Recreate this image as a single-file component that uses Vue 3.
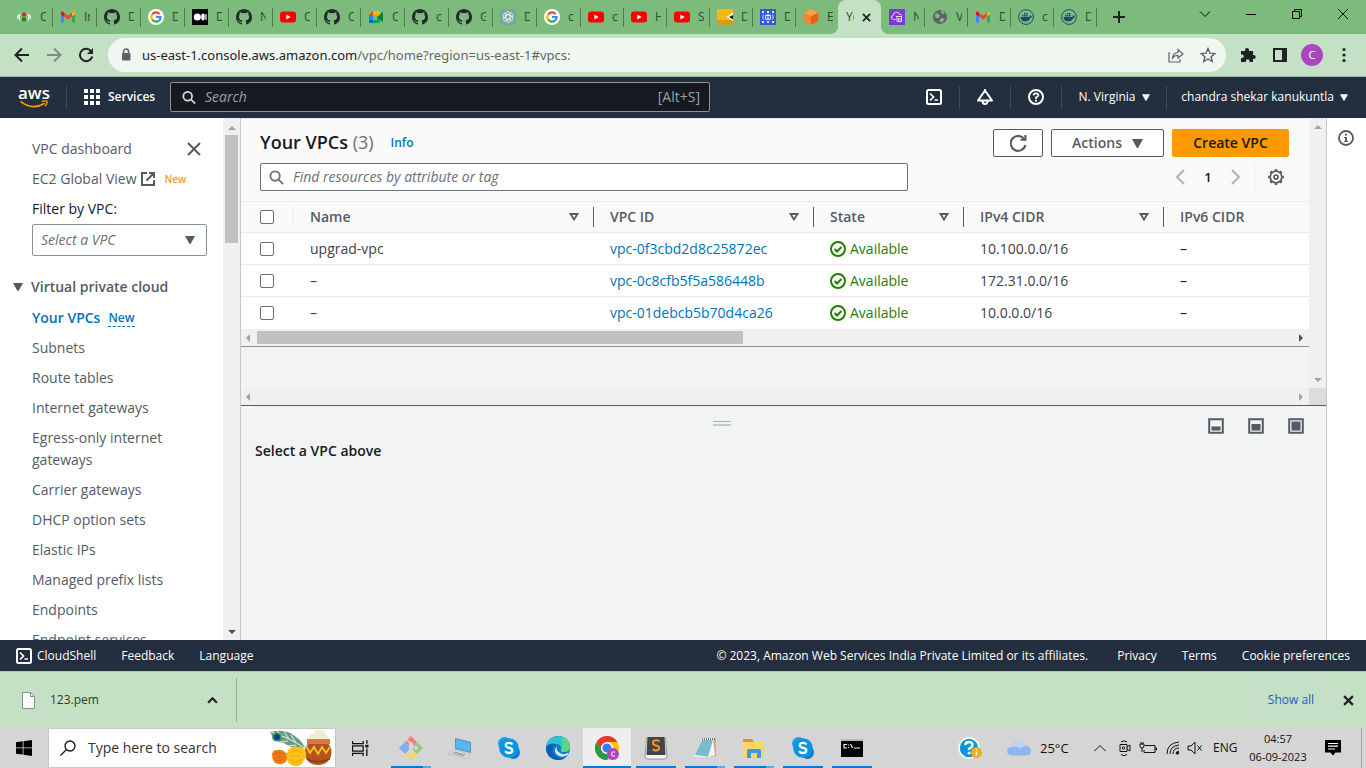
<script setup>
import { ref } from 'vue'

const tabs = [
  { icon: 'jenkins', text: 'C' }, { icon: 'gmail', text: 'In' }, { icon: 'github', text: 'D' },
  { icon: 'google', text: 'D' }, { icon: 'medium', text: 'D' }, { icon: 'github', text: 'N' },
  { icon: 'youtube', text: 'C' }, { icon: 'github', text: 'C' }, { icon: 'meet', text: 'C' },
  { icon: 'github', text: 'c' }, { icon: 'github', text: 'G' }, { icon: 'openai', text: 'D' },
  { icon: 'google', text: 'c' }, { icon: 'youtube', text: 'c' }, { icon: 'youtube', text: 'H' },
  { icon: 'youtube', text: 'S' }, { icon: 'yellow', text: 'D' }, { icon: 'ecs', text: 'D' },
  { icon: 'cube', text: 'E' }, { icon: '', text: 'Yo', active: true }, { icon: 'vpc', text: 'N' },
  { icon: 'globe', text: 'V' }, { icon: 'gmail', text: 'D' }, { icon: 'docker', text: 'c' },
  { icon: 'docker', text: 'D' }
]

const navItems = [
  'Subnets', 'Route tables', 'Internet gateways', 'Egress-only internet gateways',
  'Carrier gateways', 'DHCP option sets', 'Elastic IPs', 'Managed prefix lists',
  'Endpoints', 'Endpoint services'
]

const columns = ['Name', 'VPC ID', 'State', 'IPv4 CIDR', 'IPv6 CIDR']
const rows = [
  { name: 'upgrad-vpc', id: 'vpc-0f3cbd2d8c25872ec', v4: '10.100.0.0/16' },
  { name: '–', id: 'vpc-0c8cfb5f5a586448b', v4: '172.31.0.0/16' },
  { name: '–', id: 'vpc-01debcb5b70d4ca26', v4: '10.0.0.0/16' }
]

const apps = [
  { icon: 'git', label: 'Git Bash', state: 'multi' },
  { icon: 'laptop', label: 'Remote desktop', state: '' },
  { icon: 'skype', label: 'Skype', state: '' },
  { icon: 'edge', label: 'Microsoft Edge', state: '' },
  { icon: 'chrome', label: 'Google Chrome', state: 'current' },
  { icon: 'sublime', label: 'Sublime Text', state: 'open' },
  { icon: 'notepad', label: 'Notepad', state: 'multi' },
  { icon: 'explorer', label: 'File Explorer', state: 'multi' },
  { icon: 'skype', label: 'Skype call', state: 'open' },
  { icon: 'cmd', label: 'Command Prompt', state: 'open' }
]

const service = ref('')
const query = ref('')
const selected = ref([])
</script>

<template>
  <div class="screen">
    <svg class="defs" aria-hidden="true">
      <symbol id="jenkins" viewBox="0 0 16 16"><circle cx="8" cy="5.6" r="2.1" fill="#c62828"/><circle cx="8" cy="10.4" r="2.1" fill="#128a12"/><path d="M4 4.5Q2.6 8 4 11.5M12 4.5q1.4 3.500 0 7M2.200 5.500Q1 8 2.200 10.500M13.800 5.500Q15 8 13.800 10.500" fill="none" stroke="#e4f5e2" stroke-width="1.300"/></symbol>
      <symbol id="gmail" viewBox="0 0 16 16"><path d="M1 4v9.500h3V7z" fill="#4285f4"/><path d="M15 4v9.500h-3V7z" fill="#34a853"/><path d="M1 3.500 2.500 2.500 8 6.700l5.500-4.200L15 3.500V5L8 10.400 1 5z" fill="#ea4335"/><path d="M12 3.700 13.500 2.500Q15 2.500 15 4v1.500L12 7.600z" fill="#fbbc04"/><path d="M4 3.700 2.500 2.500Q1 2.500 1 4v1.500L4 7.600z" fill="#c5221f"/></symbol>
      <symbol id="github" viewBox="0 0 16 16"><path fill="#24292f" d="M8 0C3.580 0 0 3.580 0 8c0 3.540 2.290 6.530 5.470 7.590.4.070.55-.17.55-.38v-1.340c-2.230.48-2.700-1.070-2.700-1.070-.36-.92-.89-1.170-.89-1.170-.73-.5.050-.49.050-.49.810.060 1.230.83 1.230.83.720 1.230 1.880.88 2.340.67.070-.52.280-.88.510-1.080-1.780-.2-3.640-.89-3.640-3.950 0-.87.310-1.590.82-2.150-.08-.2-.36-1.020.080-2.120 0 0 .67-.21 2.200.82a7.600 7.600 0 0 1 4 0c1.530-1.040 2.200-.82 2.200-.82.440 1.100.160 1.920.080 2.120.51.560.82 1.270.82 2.150 0 3.070-1.870 3.750-3.650 3.950.29.250.54.730.54 1.480v2.200c0 .21.150.46.550.38A8 8 0 0 0 16 8c0-4.420-3.580-8-8-8z"/></symbol>
      <symbol id="google" viewBox="0 0 16 16"><circle cx="8" cy="8" r="8" fill="#fff"/><g fill="none" stroke-width="2.200"><path d="M4.100 5.500A4.600 4.600 0 0 1 11.500 5" stroke="#ea4335"/><path d="M4.100 5.500A4.600 4.600 0 0 0 4.200 10.700" stroke="#fbbc05"/><path d="M4.200 10.500A4.600 4.600 0 0 0 11 11.600" stroke="#34a853"/><path d="M8 8h4.600q0 2.300-1.600 3.600" stroke="#4285f4"/></g></symbol>
      <symbol id="medium" viewBox="0 0 16 16"><path fill="#000" d="M0 0h16v16H0z"/><circle cx="5.300" cy="8" r="3.600" fill="#fff"/><ellipse cx="11" cy="8" rx="1.800" ry="3.400" fill="#fff"/><path d="M14 5v6" stroke="#fff" stroke-width="1.200"/></symbol>
      <symbol id="youtube" viewBox="0 0 16 16"><rect y="2.500" width="16" height="11" rx="3" fill="#f00"/><path d="M6.300 5.500v5L10.700 8z" fill="#fff"/></symbol>
      <symbol id="meet" viewBox="0 0 16 16"><path d="M1 6l4-4v4z" fill="#ea4335"/><path d="M1 6h4v5H1z" fill="#2684fc"/><path d="M1 11h4v3H2q-1 0-1-1z" fill="#0066da"/><path d="M5 2h6q1 0 1 1v3L9 8V6H5z" fill="#ffba00"/><path d="M5 14h6q1 0 1-1v-3L9 8v3H5z" fill="#00ac47"/><path d="M9 8l5-4.500q1-.5 1 .5v8q0 1-1 .5z" fill="#00832d"/></symbol>
      <symbol id="openai" viewBox="0 0 16 16"><rect width="16" height="16" rx="2" fill="#74a89c"/><g fill="none" stroke="#e8f3f0" stroke-width=".8"><path id="petal" d="M6 8.800V4.500Q6 2.500 8 2.500q1.500 0 2.200 1.200L6.500 6"/><use href="#petal" transform="rotate(60 8 8)"/><use href="#petal" transform="rotate(120 8 8)"/><use href="#petal" transform="rotate(180 8 8)"/><use href="#petal" transform="rotate(240 8 8)"/><use href="#petal" transform="rotate(300 8 8)"/></g></symbol>
      <symbol id="yellow" viewBox="0 0 16 16"><path fill="#f4b915" d="M0 0h16v16H0z"/><path d="M0 11h16v5H0z" fill="#d39b22"/><path d="M16 3.500 9.500 8l6.500 4z" fill="#fff"/><path d="M16 6l-4 2 4 2.500z" fill="#111"/></symbol>
      <symbol id="ecs" viewBox="0 0 16 16"><path fill="#3557d8" d="M0 0h16v16H0z"/><g fill="none" stroke="#dfe5ff" stroke-width=".9"><path d="M5.500 6.500h5v4h-5zM5 6.500h6M7.200 6.500v-1h1.600v1M7.200 7.500v2.500M8.800 7.500v2.500M3.500 5.500Q2 8 3.500 10.500M12.500 5.500q1.500 2.500 0 5"/><path d="M2 3h2M7 3h2M12 3h2M2 13h2M7 13h2M12 13h2" stroke-width="1.800"/></g></symbol>
      <symbol id="cube" viewBox="0 0 16 16"><path d="M8 0l7.200 3.800v8.400L8 16 .8 12.200V3.800z" fill="#f58536"/><path d="M8 0l7.200 3.800L8 7.600.8 3.800z" fill="#fba04c"/><path d="M8 7.600l7.200-3.800v8.400L8 16z" fill="#e8611a"/></symbol>
      <symbol id="vpc" viewBox="0 0 16 16"><path fill="#7a3bd0" d="M0 0h16v16H0z"/><path d="M6.500 10.500H4.500Q2 10 2.500 8q.3-1.500 1.700-1.500Q4.500 3 7.500 3q2.300 0 3 2.300Q12.500 5 13 6.500M7 7.500h6M8 7.500v5h4.500v-5M9.500 9v2.500M11 9v2.500" fill="none" stroke="#f0e6ff" stroke-width=".9"/></symbol>
      <symbol id="globe" viewBox="0 0 16 16"><circle cx="8" cy="8" r="7" fill="#5f6368"/><path d="M3 4.500h3l2 2-1.500 2.500H3.500zM9 2h2.500l1 2.500L10 5zM9 9l3.500.500L11.500 12 9 13.500 7.500 12z" fill="#7cbb7c"/></symbol>
      <symbol id="docker" viewBox="0 0 16 16"><circle cx="8" cy="8" r="7.400" fill="#7cbb8a" stroke="#1d4d63"/><path d="M2.500 8h9q.2-1.600 1-2 .8.600.8 1.600h1q-.5 1.400-2 1.400-1.300 3.500-5.300 3.500Q3 12.500 2.500 8zM4 6h1.500v1.500H4zM6 6h1.500v1.500H6zM8 6h1.500v1.500H8zM6 4h1.500v1.500H6zM8 4h1.500v1.500H8z" fill="#1d4d63"/></symbol>
      <symbol id="search" viewBox="0 0 16 16"><circle cx="6.500" cy="6.500" r="5" fill="none" stroke="currentColor" stroke-width="2"/><path d="M10 10l5 5" stroke="currentColor" stroke-width="2"/></symbol>
      <symbol id="shell" viewBox="0 0 16 16"><rect x="1" y="1" width="14" height="14" rx="1.500" fill="none" stroke="currentColor" stroke-width="2"/><path d="M4 4.500 7.500 8 4 11.500M8.500 11H12" fill="none" stroke="currentColor" stroke-width="1.700"/></symbol>
      <symbol id="caret" viewBox="0 0 10 8"><path d="M0 0h10L5.500 8h-1z" fill="currentColor"/></symbol>

      <symbol id="git" viewBox="0 0 24 24"><path d="M12 0l6 6-4 4-2-2-3 1-3-3z" fill="#f07f78"/><path d="M0 12l6-6 4 4v4l-4 4z" fill="#7eb0f6"/><path d="M6 18l4-4 2 2 4-2 3 4-7 6z" fill="#f6d667"/><path d="M14 10l4-4 6 6-6 6-4-4z" fill="#92c981"/><path d="M8 4l4 4v9M12 8l4 4" stroke="#d7d7d7" stroke-width="1.500" fill="none"/><circle cx="12" cy="8" r="2" fill="#d7d7d7"/><circle cx="12" cy="17" r="2" fill="#d7d7d7"/><circle cx="17" cy="12" r="2" fill="#d7d7d7"/></symbol>
      <symbol id="laptop" viewBox="0 0 24 24"><path d="M7 2l16 4v11L7 13z" fill="#5b92bd"/><path d="M8 3.500 22 7v8.500L8 12z" fill="#58b7f0"/><path d="M6 14l16 4-4 4L0 18z" fill="#dfe3e6" stroke="#aeb5ba" stroke-width=".7"/><path d="M6 16l12 3M4 17l12 3" stroke="#8d959b"/></symbol>
      <symbol id="skype" viewBox="0 0 24 24"><circle cx="7.500" cy="7.500" r="6.500" fill="#16a5e3"/><circle cx="16.500" cy="16.500" r="6.500" fill="#0a78d4"/><circle cx="12" cy="12" r="9.800" fill="#0b95de"/><path d="M15.500 8.500Q14.500 6.800 12 6.800q-3.200 0-3.200 2.500 0 1.800 3.200 2.500t3.300 2.500q0 2.700-3.300 2.700-2.800 0-3.700-2" fill="none" stroke="#fff" stroke-width="2.300"/></symbol>
      <symbol id="edge" viewBox="0 0 24 24"><circle cx="12" cy="12" r="12" fill="#1477c8"/><path d="M0 10Q2 0 12.500 0 23 0 24 10q0 6-6 6-4 0-3-2 1-6-5-6-6 0-10 2z" fill="#2fc4ce"/><path d="M16 1q8 3 8 9 0 6-6 6-4 0-3-2 2-2 1-13z" fill="#5fdd6c" opacity=".8"/><path d="M10 8q-6 4-2 11 4 5 12 2-3 3-8 3Q1 23 0 13q2-7 10-5z" fill="#0e5cab"/><path d="M11 10q-5 6 2 10 4 2 8-1 2 0 1-2-4 2-7 .5Q9 15 11 10z" fill="#d4ecf5"/></symbol>
      <symbol id="chrome" viewBox="0 0 24 24"><circle cx="12" cy="12" r="12" fill="#fbc116"/><path d="M1.600 6A12 12 0 0 1 22.400 6H12L7 15z" fill="#e33b2e"/><path d="M1.600 6A12 12 0 0 0 12 24l5.200-9H7z" fill="#249a48"/><circle cx="12" cy="12" r="6" fill="#fff"/><circle cx="12" cy="12" r="4.600" fill="#3b7ded"/><circle cx="18" cy="18" r="6" fill="#ab47bc"/><path d="M20 16.500Q18.500 15 17 16.700q-1 1.500 0 2.700 1.500 1.500 3 0" fill="none" stroke="#f3dcf7" stroke-width="1.100"/></symbol>
      <symbol id="sublime" viewBox="0 0 24 24"><path d="M2.500 2h19L23 20q0 3-2 3H3q-2 0-2-3z" fill="#f3f3f3" stroke="#777" stroke-width=".7"/><path d="M3.500 1h17l1 17q0 1-1 1h-17q-1 0-1-1z" fill="#444"/><path d="M15.500 5.500Q14 4 12 4.300 9 4.500 9 7q0 2 3 2.500t3 2.500q0 2.500-3 2.500-2 0-3.300-1.300" fill="none" stroke="#f7942b" stroke-width="2"/></symbol>
      <symbol id="notepad" viewBox="0 0 24 24"><path d="M10 3h13v17l-6 1z" fill="#c9b084"/><path d="M9 2h12l-5 19H1z" fill="#e8f2f4"/><path d="M9 4h11l-5 16.500L2 19z" fill="#7bbccb"/><path d="M20 4l2 15-6 2z" fill="#f5f7f7"/><path d="M9 3h13" stroke="#777" stroke-width="2" stroke-dasharray="1 1"/></symbol>
      <symbol id="explorer" viewBox="0 0 24 24"><path d="M1 3h9l2 3h10v4H1z" fill="#d99a11"/><path d="M1 6h21v15H1z" fill="#fbd46a"/><path d="M5 22v-7q0-2 2-2h10q2 0 2 2v7h-4v-5H9v5z" fill="#3b9ae3"/></symbol>
      <symbol id="cmd" viewBox="0 0 24 24"><path fill="#050505" d="M1 3h22v18H1z"/><path d="M1 3h22v2H1z" fill="#b9b9b9"/><path d="M7 8.500H4v3.500h3M8.500 8.500v1M8.500 11v1M10.500 8l2 4M14 12h6" fill="none" stroke="#eee" stroke-width="1.200"/></symbol>
    </svg>

    <header class="tabstrip">
      <div v-for="(t, i) in tabs" :key="i" class="tab" :class="{ active: t.active }">
        <svg v-if="t.icon" class="favicon"><use :href="'#' + t.icon" /></svg>
        <span class="tab-text">{{ t.text }}</span>
        <button v-if="t.active" class="tab-close" aria-label="Close tab"><svg viewBox="0 0 10 10"><path d="M1 1l8 8M9 1 1 9" stroke="#202124" stroke-width="2"/></svg></button>
      </div>
      <button class="new-tab" aria-label="New tab"><svg viewBox="0 0 12 12"><path d="M6 0v12M0 6h12" stroke="#202124" stroke-width="2"/></svg></button>
      <div class="win-controls">
        <button aria-label="Search tabs"><svg viewBox="0 0 12 12"><path d="M1 3.500l5 5 5-5" /></svg></button>
        <button aria-label="Minimize"><svg viewBox="0 0 12 12"><path d="M1 6.500h10" /></svg></button>
        <button aria-label="Restore"><svg viewBox="0 0 12 12"><path d="M1.500 3.500h7v7h-7zM3.500 3.500v-2h7v7h-2" /></svg></button>
        <button aria-label="Close window"><svg viewBox="0 0 12 12"><path d="M1 1l10 10M11 1 1 11" /></svg></button>
      </div>
    </header>

    <div class="toolbar">
      <button aria-label="Back"><svg viewBox="0 0 16 16"><path d="M15 8H2M8 1.500 1.500 8 8 14.500" stroke="#202124"/></svg></button>
      <button aria-label="Forward"><svg viewBox="0 0 16 16"><path d="M1 8h13M8 1.500 14.500 8 8 14.500" stroke="#7d907d"/></svg></button>
      <button aria-label="Reload"><svg viewBox="0 0 16 16"><path d="M13.300 4.500A6.200 6.200 0 1 0 14.200 9.500" stroke="#202124"/><path d="M15 1v6H9z" fill="#202124" stroke="none"/></svg></button>
      <div class="omnibox">
        <svg class="lock" viewBox="0 0 10 14"><path d="M2.500 6V3.500a2.500 2.500 0 0 1 5 0V6" fill="none" stroke="#5f6368" stroke-width="1.500"/><rect x="1" y="5" width="8.500" height="7.500" rx="1" fill="#5f6368"/></svg>
        <div class="address"><span class="host">us-east-1.console.aws.amazon.com</span>/vpc/home?region=us-east-1#vpcs:</div>
        <button aria-label="Share"><svg viewBox="0 0 16 16"><path d="M2 6H1v9h11v-3M4.500 11Q5 6 10 5.500V2.500L15 7l-5 4V8.500Q7 8 4.500 11z" fill="none" stroke="#5f6368" stroke-width="1.200"/></svg></button>
        <button aria-label="Bookmark"><svg viewBox="0 0 16 16"><path d="M8 1.500l1.900 4.600 4.900.400-3.700 3.200 1.100 4.800L8 12l-4.200 2.500 1.100-4.800L1.200 6.500l4.900-.4z" fill="none" stroke="#5f6368" stroke-width="1.400"/></svg></button>
      </div>
      <button aria-label="Extensions"><svg viewBox="0 0 16 16"><path d="M1 4h4V3a2 2 0 0 1 4 0v1h4v4h.700a2 2 0 0 1 0 4H13v3H9.500v-1a1.800 1.800 0 0 0-3.600 0v1H1v-4h1a1.800 1.800 0 0 0 0-3.600H1z" fill="#202124" stroke="none"/></svg></button>
      <button aria-label="Side panel"><svg viewBox="0 0 16 16"><path d="M2 2h12v12H2z" stroke="#202124"/><path d="M10 2h4v12h-4z" fill="#202124" stroke="none"/></svg></button>
      <button class="profile" aria-label="Profile">C</button>
      <button aria-label="Menu"><svg viewBox="0 0 16 16"><g fill="#202124" stroke="none"><circle cx="8" cy="2.500" r="1.600"/><circle cx="8" cy="8" r="1.600"/><circle cx="8" cy="13.500" r="1.600"/></g></svg></button>
    </div>

    <nav class="aws-nav">
      <a href="#" class="aws-logo" aria-label="AWS home">
        <span>aws</span>
        <svg viewBox="0 0 32 10"><path d="M1 1.500Q14 12 28 3.500" fill="none" stroke="#f90" stroke-width="2"/><path d="M24.500 1.500Q29 .5 30.500 1.500 31 4 28.500 7" fill="none" stroke="#f90" stroke-width="1.500"/></svg>
      </a>
      <i class="sep"></i>
      <button class="services"><svg viewBox="0 0 16 16"><path d="M0 0h4v4H0zM6 0h4v4H6zM12 0h4v4h-4zM0 6h4v4H0zM6 6h4v4H6zM12 6h4v4h-4zM0 12h4v4H0zM6 12h4v4H6zM12 12h4v4h-4z" fill="#fff"/></svg>Services</button>
      <label class="aws-search">
        <svg><use href="#search" /></svg>
        <input v-model="service" type="text" placeholder="Search" aria-label="Search services" />
        <span>[Alt+S]</span>
      </label>
      <div class="nav-right">
        <button class="nav-icon" aria-label="CloudShell"><svg><use href="#shell" /></svg></button>
        <i class="sep"></i>
        <button class="nav-icon" aria-label="Notifications"><svg viewBox="0 0 16 16"><path d="M8 1.500 1 11.500h14zM5.500 12q0 3 2.500 3t2.500-3M8 0v3" fill="none" stroke="#fff" stroke-width="2" stroke-linejoin="round"/></svg></button>
        <i class="sep"></i>
        <button class="nav-icon" aria-label="Help"><svg viewBox="0 0 16 16"><circle cx="8" cy="8" r="7" fill="none" stroke="#fff" stroke-width="2"/><path d="M5.500 6.300Q5.700 4.300 8 4.300t2.400 1.900Q10.400 7.500 8 8.200V10" fill="none" stroke="#fff" stroke-width="1.700"/><path d="M7 10.800h2v1.800H7z" fill="#fff"/></svg></button>
        <i class="sep"></i>
        <button class="region">N. Virginia<svg><use href="#caret" /></svg></button>
        <i class="sep"></i>
        <button class="account">chandra shekar kanukuntla<svg><use href="#caret" /></svg></button>
      </div>
    </nav>

    <div class="console">
      <aside class="side">
        <div class="side-content">
          <div class="side-head"><a href="#">VPC dashboard</a><button aria-label="Close navigation"><svg viewBox="0 0 14 14"><path d="M1 1l12 12M13 1 1 13" stroke="#545b64" stroke-width="2"/></svg></button></div>
          <div class="side-line"><a href="#">EC2 Global View</a><svg class="ext" viewBox="0 0 14 14"><path d="M6 1H1v12h12V8M8 1h5v5M13 1 5.500 8.500" fill="none" stroke="#545b64" stroke-width="2"/></svg><small>New</small></div>
          <label class="filter-label" for="vpc-filter">Filter by VPC:</label>
          <div class="select-box"><select id="vpc-filter"><option>Select a VPC</option></select><svg><use href="#caret" /></svg></div>
          <h2><svg><use href="#caret" /></svg>Virtual private cloud</h2>
          <ul>
            <li class="current"><a href="#">Your VPCs</a><span>New</span></li>
            <li v-for="n in navItems" :key="n"><a href="#">{{ n }}</a></li>
          </ul>
        </div>
        <div class="vbar side-bar"><i class="up"></i><b class="side-thumb"></b><i class="down strong"></i></div>
      </aside>

      <main>
        <div class="top-pane">
          <section class="pane-body">
            <div class="list-head">
              <div class="title-row">
                <h1>Your VPCs <span>(3)</span></h1><a href="#" class="info">Info</a>
                <div class="actions">
                  <button class="btn refresh" aria-label="Refresh"><svg viewBox="0 0 16 16"><path d="M14.500 9.500A7 7 0 1 1 13.500 4" fill="none" stroke="#545b64" stroke-width="2"/><path d="M10 5.500h5.500V0h-2v3.500H10z" fill="#545b64"/></svg></button>
                  <button class="btn act">Actions<svg><use href="#caret" /></svg></button>
                  <button class="btn create">Create VPC</button>
                </div>
              </div>
              <div class="filter-row">
                <label class="finder"><svg><use href="#search" /></svg><input v-model="query" type="text" placeholder="Find resources by attribute or tag" aria-label="Find resources by attribute or tag" /></label>
                <div class="pager">
                  <button aria-label="Previous page"><svg viewBox="0 0 10 16"><path d="M9 1 2 8l7 7" /></svg></button>
                  <span>1</span>
                  <button aria-label="Next page"><svg viewBox="0 0 10 16"><path d="M1 1l7 7-7 7" /></svg></button>
                  <button class="gear" aria-label="Preferences"><svg viewBox="0 0 16 16"><g fill="none" stroke="#545b64"><circle cx="8" cy="8" r="5.800" stroke-width="1.700"/><circle cx="8" cy="8" r="7.200" stroke-width="1.500" pathLength="16" stroke-dasharray="1 1" stroke-dashoffset=".5"/><circle cx="8" cy="8" r="2" stroke-width="1.700"/></g></svg></button>
                </div>
              </div>
            </div>
            <table>
              <colgroup><col class="c0" /><col class="c1" /><col class="c2" /><col class="c3" /><col class="c4" /><col /></colgroup>
              <thead>
                <tr>
                  <th><input type="checkbox" aria-label="Select all" /></th>
                  <th v-for="(c, i) in columns" :key="c"><div>{{ c }}<svg v-if="i < 4" viewBox="0 0 10 8"><path d="M1.500 1h7L5 6.500z" fill="none" stroke="#545b64" stroke-width="1.800"/></svg></div></th>
                </tr>
              </thead>
              <tbody>
                <tr v-for="r in rows" :key="r.id">
                  <td><input v-model="selected" type="checkbox" :value="r.id" :aria-label="'Select ' + r.id" /></td>
                  <td>{{ r.name }}</td>
                  <td><a href="#">{{ r.id }}</a></td>
                  <td><span class="ok"><svg viewBox="0 0 16 16"><circle cx="8" cy="8" r="7" fill="none" stroke="#1d8102" stroke-width="2"/><path d="M4.500 8 7 10.500l4.500-4.500" fill="none" stroke="#1d8102" stroke-width="2"/></svg>Available</span></td>
                  <td>{{ r.v4 }}</td>
                  <td>–</td>
                </tr>
              </tbody>
            </table>
            <div class="hbar table-bar"><i class="left"></i><b></b><i class="right strong"></i></div>
          </section>
          <div class="vbar"><i class="up"></i><i class="down"></i></div>
          <div class="hbar"><i class="left"></i><i class="right"></i></div>
          <div class="corner"></div>
        </div>
        <section class="split">
          <div class="grip"></div>
          <div class="split-tools">
            <button aria-label="Small panel"><svg viewBox="0 0 16 16"><path d="M1.200 1.200h13.600v13.600H1.200z" /><path class="fill" d="M3.500 8.500h9v4h-9z" /></svg></button>
            <button aria-label="Medium panel"><svg viewBox="0 0 16 16"><path d="M1.200 1.200h13.600v13.600H1.200z" /><path class="fill" d="M3.500 6h9v6.500h-9z" /></svg></button>
            <button aria-label="Full panel"><svg viewBox="0 0 16 16"><path d="M1.200 1.200h13.600v13.600H1.200z" /><path class="fill" d="M3.500 3.500h9v9h-9z" /></svg></button>
          </div>
          <h3>Select a VPC above</h3>
        </section>
      </main>
      <aside class="tools"><button aria-label="Information"><svg viewBox="0 0 16 16"><circle cx="8" cy="8" r="7" fill="none" stroke="#545b64" stroke-width="1.800"/><path d="M7 3.700h2v1.800H7zM6 7h3v4h1v1H6v-1h1V8H6z" fill="#545b64"/></svg></button></aside>
    </div>

    <footer class="aws-foot">
      <button class="cs"><svg><use href="#shell" /></svg>CloudShell</button>
      <a href="#" class="feedback">Feedback</a>
      <a href="#">Language</a>
      <span class="copy">© 2023, Amazon Web Services India Private Limited or its affiliates.</span>
      <a href="#" class="privacy">Privacy</a>
      <a href="#" class="terms">Terms</a>
      <a href="#">Cookie preferences</a>
    </footer>

    <div class="downloads">
      <div class="download">
        <svg class="file" viewBox="0 0 13 17"><path d="M.5.500h8l4 4v12H.5z" fill="#fafafa" stroke="#8d8d8d"/><path d="M8.500.500v4h4" fill="none" stroke="#8d8d8d"/></svg>
        <span>123.pem</span>
        <button aria-label="Download options"><svg viewBox="0 0 10 8"><path d="M1 6l4-4 4 4" fill="none" stroke="#202124" stroke-width="2"/></svg></button>
      </div>
      <button class="show-all">Show all</button>
      <button class="dismiss" aria-label="Close downloads"><svg viewBox="0 0 10 10"><path d="M1 1l8 8M9 1 1 9" stroke="#202124" stroke-width="2"/></svg></button>
    </div>

    <div class="taskbar">
      <button class="start" aria-label="Start"><svg viewBox="0 0 16 16"><path d="M0 2.300 6.700 1.300v6.200H0zM7.500 1.200 16 0v7.500H7.500zM0 8.300h6.700v6.300L0 13.700zM7.500 8.300H16V16l-8.500-1.200z" fill="#000"/></svg></button>
      <label class="win-search">
        <svg class="lens" viewBox="0 0 16 16"><circle cx="10" cy="6" r="5" fill="none" stroke="#111" stroke-width="1.300"/><path d="M6.500 9.500.5 15.500" stroke="#111" stroke-width="1.300"/></svg>
        <input type="text" placeholder="Type here to search" aria-label="Type here to search" />
        <svg class="festive" viewBox="0 0 64 38">
          <path d="M1 3Q17-1 27 8 34 13 36 19 24 21 15 14 5 13 1 3z" fill="#6a9a87"/><path d="M2 3q15 4 35 17M8 2l6 6M15 3l6 8M22 6l5 8M5 9l8-1M11 13l8-1M19 17l8-1" stroke="#dbe8d9" stroke-width="1.200" fill="none"/>
          <ellipse cx="8" cy="8" rx="5" ry="4.500" fill="#3d9b54"/><circle cx="8" cy="8" r="3" fill="#143a9e"/>
          <path d="M42 13q-8 4-6 14 3 9 13 9t13-9q2-10-5-14z" fill="#b5521f"/><path d="M38 10h23v5H38z" fill="#d8793a"/><path d="M40 10q-1-6 5-5 1-5 6-4 6 0 6 5 4 1 2 4z" fill="#f3ead1"/><path d="M37 17l4 7 4-6 4 7 4-7 4 6 4-6" stroke="#f8c51f" stroke-width="1.800" fill="none"/><path d="M38 30q11 5 23 0" stroke="#7c2e10" fill="none"/>
          <path d="M3 25q1-4 5-4 5-1 8 2 4 3 2 7-2 6-8 5-7 0-7-10z" fill="#f27a12"/><path d="M6 26q4-4 8-1M7 31q4 2 7-1M8 28h5" fill="none" stroke="#dd6209"/>
          <path d="M20 20q4-4 9-2 6 0 8 5 1 5-2 8-2 6-8 6-7 0-9-6-2-6 2-11z" fill="#fcc216"/><path d="M21 24q6-5 12 0M21 31q6 4 12-1M23 28q4-3 8 0" fill="none" stroke="#f2a80e" stroke-width="1.200"/>
        </svg>
      </label>
      <button class="taskview" aria-label="Task view"><svg viewBox="0 0 16 16"><path d="M.5 1v2.500h10V1M.500 5.500h10v5H.500zM.500 15v-2.500h10V15M14 0v3.500M14 8v7" fill="none" stroke="#111" stroke-width="1.200"/><path d="M12.500 4.500h3v2.500h-3z" fill="#111"/></svg></button>
      <div class="apps">
        <button v-for="a in apps" :key="a.label" :class="a.state" :aria-label="a.label"><svg><use :href="'#' + a.icon" /></svg></button>
      </div>
      <div class="tray">
        <svg class="help" viewBox="0 0 24 22"><circle cx="11" cy="11" r="10" fill="#0e95d8" stroke="#fff" stroke-width="1.500"/><path d="M7.500 8Q7.500 5 11 5t3.500 3q0 2-3.500 3.500V13" fill="none" stroke="#fff" stroke-width="2.400"/><circle cx="11" cy="16" r="1.500" fill="#fff"/><circle cx="18.500" cy="15.500" r="5.500" fill="#f4ad23"/><path d="M18.500 14.500v4M18.500 12v1.300" stroke="#fff" stroke-width="1.300"/></svg>
        <svg class="cloud" viewBox="0 0 24 16"><path d="M5 15.500Q0 15 0 11q0-4 5-4Q6 1 12 1q5 0 7 5 5 .5 5 5 0 4.500-5 4.500z" fill="#8fb5f0"/><path d="M5 7q1-6 7-6 5 0 7 5-4 0-5 3Q11 6 5 7z" fill="#bed4f7"/></svg>
        <span class="temp">25°C</span>
        <svg class="chev" viewBox="0 0 12 8"><path d="M.5 7 6 1.500 11.500 7" /></svg>
        <svg class="cam" viewBox="0 0 14 18"><path d="M2 5.500h7v7H2zM9 8l3-2v6l-3-2M3 3Q6 .5 9 3M3 15.500q3 2.500 6 0" /><circle cx="5.500" cy="9" r="1.200"/></svg>
        <svg class="bat" viewBox="0 0 18 14"><path d="M6 4.500h10v7H5V9M16 7h1.500v2H16M1 3h4v2Q5 7 3 7T1 5zM2 1v2M4 1v2M3 7v4" /></svg>
        <svg class="wifi" viewBox="0 0 14 14"><path d="M1 13Q1 2 13 1M4 13Q4 5 13 4M7 13q0-6 6-6" /><path d="M10 13q0-2.500 3-3" /><circle cx="11.500" cy="12" r="1.200" class="dot"/></svg>
        <svg class="vol" viewBox="0 0 16 14"><path d="M1 5h3l4-4v12L4 9H1zM10.500 4.500l4 5M14.500 4.500l-4 5" /></svg>
        <span class="lang">ENG</span>
        <div class="clock"><span>04:57</span><span>06-09-2023</span></div>
        <button class="notif" aria-label="Notifications panel"><svg viewBox="0 0 16 16"><path d="M0 0h16v12.500H10.500L8 15.500 5.500 12.500H0z" fill="#000"/><path d="M3 3.500h10M3 6.200h10M3 9h7" stroke="#fff" stroke-width="1.200"/></svg></button>
      </div>
    </div>
  </div>
</template>

<style>
html, body { margin: 0; overflow: hidden; }
</style>

<style scoped>
* { box-sizing: border-box; }
.screen { height: 100vh; display: flex; flex-direction: column; font: 14px/22px "Open Sans", "Noto Sans", sans-serif; color: #16191f; overflow: hidden; }
.defs { position: absolute; width: 0; height: 0; }
button { font: inherit; color: inherit; border: 0; padding: 0; margin: 0; background: none; display: flex; align-items: center; justify-content: center; flex: none; }
a { color: inherit; text-decoration: none; }
input, select { font: inherit; color: inherit; margin: 0; }
svg { display: block; flex: none; }
h1, h2, h3, ul { margin: 0; padding: 0; }

.tabstrip { flex: none; height: 34px; background: #7cbb7c; display: flex; padding-left: 8px; }
.tab { width: 43px; flex: none; display: flex; align-items: center; gap: 8px; padding-left: 8px; position: relative; }
.tab:nth-child(-n+13) { width: 44px; }
.tab::after { content: ""; position: absolute; right: -1px; top: 8px; height: 19px; width: 1px; background: #4f7a50; }
.tab:nth-child(19)::after, .tab.active::after { display: none; }
.favicon { width: 16px; height: 16px; }
.tab-text { width: 6px; overflow: hidden; white-space: nowrap; font-size: 12px; line-height: 18px; color: #2e4a2f; }
.tab.active { background: #c5e1c5; border-radius: 8px 8px 0 0; gap: 7px; }
.tab.active::before { content: ""; position: absolute; left: -8px; right: -8px; bottom: 0; height: 8px; background: radial-gradient(circle at 0 0, transparent 8px, #c5e1c5 8px) left / 8px 8px no-repeat, radial-gradient(circle at 100% 0, transparent 8px, #c5e1c5 8px) right / 8px 8px no-repeat; }
.tab.active .tab-text { width: 8px; }
.tab-close { width: 10px; }
.tab-close svg { width: 9px; height: 9px; }
.new-tab { width: 28px; margin-left: 9px; }
.new-tab svg { width: 12px; height: 12px; }
.win-controls { margin-left: auto; display: flex; height: 28px; }
.win-controls button { width: 46px; }
.win-controls svg { width: 12px; height: 12px; fill: none; stroke: #000; }

.toolbar { flex: none; height: 43px; background: #c5e1c5; border-bottom: 1px solid #a3b8a5; display: flex; align-items: center; padding: 0 6px; }
.toolbar button { width: 32px; height: 32px; }
.toolbar button svg { width: 16px; height: 16px; fill: none; stroke-width: 2; }
.omnibox { flex: 1; margin: 0 6px; height: 34px; background: #f0f7f0; border-radius: 17px; display: flex; align-items: center; padding: 0 2px 0 13px; }
.lock { width: 10px; height: 14px; }
.address { flex: 1; margin-left: 11px; color: #5f6a60; white-space: nowrap; font-family: "Noto Sans", "Open Sans", sans-serif; font-size: 13px; }
.host { color: #202124; }
.toolbar .profile { width: 22px; height: 22px; margin: 0 5px; border-radius: 50%; background: #ab47bc; color: #fff; font-size: 11px; line-height: 22px; }

.aws-nav { flex: none; height: 41px; background: #232f3e; color: #fff; display: flex; align-items: center; font-size: 12px; font-weight: 500; padding-bottom: 1px; }
.aws-logo { margin-left: 18px; width: 32px; display: flex; flex-direction: column; }
.aws-logo span { font-size: 17px; line-height: 13px; height: 14px; text-align: center; font-weight: 600; }
.aws-logo svg { width: 32px; height: 9px; }
.sep { width: 1px; height: 23px; background: #414b58; flex: none; }
.aws-logo + .sep { margin: 0 17px 0 16px; }
.services { width: 70px; gap: 8px; justify-content: flex-start; font-weight: 600; }
.services svg { width: 16px; height: 16px; }
.aws-search { flex: 0 1 540px; margin-left: 16px; height: 30px; border: 1px solid #879596; border-radius: 2px; background: #16191f; display: flex; align-items: center; padding: 0 9px 0 11px; font-weight: 400; font-size: 14px; color: #95a5a6; }
.aws-search svg { width: 14px; height: 15px; color: #d5dbdb; }
.aws-search input { flex: 1; min-width: 0; margin-left: 9px; padding: 0; border: 0; outline: 0; background: none; }
input::placeholder { color: inherit; font-style: italic; opacity: 1; }
.nav-right { margin-left: auto; display: flex; align-items: center; padding-right: 18px; }
.nav-icon { width: 50px; }
.nav-icon svg { width: 16px; height: 16px; }
.region, .account { gap: 6px; white-space: nowrap; }
.region { width: 104px; }
.account { width: 181px; justify-content: flex-end; }
.region svg, .account svg { width: 8px; height: 7px; }

.console { flex: 1; min-height: 0; display: flex; background: #fff; }
.side { width: 240px; flex: none; display: flex; overflow: hidden; color: #545b64; }
.side-content { flex: 1; padding: 20px 16px 0 32px; }
.side-head, .side-line { display: flex; align-items: center; height: 22px; margin-bottom: 8px; white-space: nowrap; }
.side-head button { margin-left: auto; margin-right: 6px; }
.side-head svg { width: 14px; height: 14px; }
.ext { width: 14px; height: 14px; margin: 0 9px 0 5px; }
.side-line small { font-size: 10px; font-weight: 600; color: #f8991d; }
.filter-label { display: block; color: #16191f; margin-bottom: 4px; }
.select-box { position: relative; color: #687078; }
.select-box select { appearance: none; width: 100%; height: 32px; padding: 0 8px; border: 1px solid #879596; border-radius: 2px; background: #fff; font-style: italic; }
.select-box svg { position: absolute; right: 12px; top: 12px; width: 10px; height: 8px; color: #545b64; pointer-events: none; }
h2 { display: flex; align-items: center; gap: 8px; margin: 20px 0 9px -19px; font-size: 14px; font-weight: 600; white-space: nowrap; }
h2 svg { width: 10px; height: 8px; }
ul { list-style: none; }
li { margin-bottom: 8px; }
.current { display: flex; align-items: center; gap: 8px; color: #0073bb; font-weight: 600; }
.current span { font-size: 12px; line-height: 16px; border-bottom: 1px dashed #0073bb; }

.vbar, .hbar { background: #f0f0f0; display: flex; justify-content: space-between; align-items: center; flex: none; }
.vbar { width: 17px; flex-direction: column; padding: 6px 0; }
.hbar { height: 17px; padding: 0 6px 0 5px; }
.side-bar { justify-content: flex-start; gap: 5px; padding-top: 8px; }
.side-bar .down { margin-top: auto; }
.side-thumb { width: 13px; height: 108px; background: #c1c1c1; }
.vbar i, .hbar i { border: 4px solid transparent; flex: none; }
.up { border-top: 0 !important; border-bottom-color: #a3a3a3 !important; }
.down { border-bottom: 0 !important; border-top-color: #a3a3a3 !important; }
.left { border-left: 0 !important; border-right-color: #a3a3a3 !important; }
.right { border-right: 0 !important; border-left-color: #a3a3a3 !important; }
.down.strong { border-top-color: #505050 !important; }
.right.strong { border-left-color: #505050 !important; }

main { flex: 1; min-width: 0; display: flex; flex-direction: column; background: #f2f3f3; border-left: 1px solid #c3c9cc; }
.top-pane { flex: none; height: 288px; display: grid; grid-template: minmax(0, 1fr) 17px / minmax(0, 1fr) 17px; border-top: 1px solid #eaeded; border-bottom: 1px solid #545b64; }
.corner { background: #dcdcdc; }
.list-head { background: #fafafa; padding: 10px 20px 10px 19px; border-bottom: 1px solid #eaeded; }
.title-row { display: flex; align-items: center; height: 28px; }
h1 { font-size: 18px; line-height: 26px; font-weight: 600; padding-bottom: 2px; }
h1 span { font-weight: 400; color: #687078; }
.info { margin-left: 17px; font-size: 12px; font-weight: 600; color: #0073bb; }
.actions { margin-left: auto; display: flex; gap: 8px; }
.btn { height: 28px; border: 1px solid #545b64; border-radius: 2px; background: #fff; color: #545b64; font-weight: 600; }
.refresh { width: 50px; }
.refresh svg { width: 17px; height: 17px; }
.act { width: 113px; gap: 10px; }
.act svg { width: 11px; height: 9px; }
.create { width: 117px; background: #f90; border-color: #f90; color: #16191f; }
.filter-row { display: flex; align-items: center; margin-top: 6px; height: 28px; }
.finder { flex: 0 1 648px; height: 28px; border: 1px solid #687078; border-radius: 2px; background: #fff; display: flex; align-items: center; padding: 0 8px; color: #687078; }
.finder svg { width: 15px; height: 15px; }
.finder input { flex: 1; min-width: 0; margin-left: 9px; padding: 0; border: 0; outline: 0; background: none; }
.pager { margin-left: auto; display: flex; align-items: center; color: #16191f; }
.pager svg { width: 10px; height: 16px; fill: none; stroke: #aab7b8; stroke-width: 2; }
.pager span { width: 46px; text-align: center; font-weight: 600; font-size: 13px; }
.pager .gear { height: 28px; border-left: 1px solid #eaeded; margin-left: 13px; padding: 0 5px 0 13px; }
.pager .gear svg { width: 16px; }

table { width: 100%; table-layout: fixed; border-collapse: separate; border-spacing: 0; background: #fff; }
.c0 { width: 52px; }
.c1 { width: 301px; }
.c2 { width: 220px; }
.c3 { width: 150px; }
.c4 { width: 200px; }
thead { background: #fafafa; }
th { height: 31px; padding: 0; font-weight: 600; text-align: left; color: #545b64; border-bottom: 1px solid #eaeded; }
th div { display: flex; align-items: center; justify-content: space-between; height: 20px; padding: 0 14px 0 16px; border-right: 1px solid #545b64; }
th:nth-child(2) div { border-left: 1px solid #eaeded; }
th:last-child div { border-right: 0; }
th svg { width: 10px; height: 8px; }
td { height: 32px; padding: 0 0 0 16px; white-space: nowrap; color: #3d4248; border-bottom: 1px solid #eaeded; }
td:nth-child(2) { padding-left: 17px; }
tbody tr:last-child td { border-bottom-color: #fff; }
th:first-child, td:first-child { padding-left: 19px; }
td:last-child { color: #16191f; }
td a { color: #0073bb; }
.ok { display: flex; align-items: center; gap: 4px; color: #1d8102; }
.ok svg { width: 16px; height: 16px; }
input[type=checkbox] { appearance: none; display: block; width: 14px; height: 14px; border: 1px solid #687078; border-radius: 2px; background: #fff; }
.table-bar { justify-content: flex-start; gap: 7px; height: 18px; border-bottom: 1px solid #879596; }
.table-bar b { width: 46%; height: 13px; background: #c1c1c1; }
.table-bar .right { margin-left: auto; }

.split { flex: 1; position: relative; padding: 34px 14px 0; }
.grip { position: absolute; top: 15px; left: 0; right: 0; margin: 0 auto; width: 18px; height: 5px; border-top: 1px solid #aab1b1; border-bottom: 2px solid #c4c9c9; transform: translateX(-62px); }
.split-tools { position: absolute; right: 22px; top: 12px; display: flex; gap: 24px; }
.split-tools svg { width: 16px; height: 16px; fill: none; stroke: #545b64; stroke-width: 2; }
.split-tools .fill { fill: #545b64; stroke: none; }
h3 { font-size: 14px; font-weight: 600; }
.tools { width: 40px; border-left: 1px solid #c3c9cc; padding: 12px 11px; }
.tools svg { width: 16px; height: 16px; }

.aws-foot { flex: none; height: 31px; background: #232f3e; color: #fff; display: flex; align-items: center; padding: 0 16px; font-size: 12px; white-space: nowrap; }
.cs { gap: 5px; }
.cs svg { width: 16px; height: 16px; }
.feedback { margin: 0 25px; }
.copy { margin-left: auto; }
.privacy { margin-left: 29px; }
.terms { margin: 0 25px; }

.downloads { flex: none; height: 57px; background: #c5e1c5; border-top: 1px solid #abc5ac; display: flex; align-items: center; font-size: 12px; }
.download { width: 237px; height: 44px; display: flex; align-items: center; padding: 0 18px 0 22px; border-right: 1px solid #99ad9a; color: #2c3a2d; }
.file { width: 13px; height: 17px; }
.download span { margin-left: 15px; }
.download button { margin-left: auto; }
.download button svg { width: 11px; height: 9px; }
.show-all { margin-left: auto; width: 78px; height: 32px; border: 1px solid #d8d8de; border-radius: 4px; color: #1a5fc0; }
.dismiss { width: 36px; }
.dismiss svg { width: 11px; height: 11px; }

.taskbar { flex: none; height: 40px; background: #d5d5d5; display: flex; align-items: stretch; color: #111; }
.start { width: 48px; }
.start svg { width: 16px; height: 16px; }
.win-search { width: 288px; border: 1px solid #c8c8c8; background: #fff; display: flex; align-items: center; padding: 0 2px 0 11px; }
.lens { width: 16px; height: 16px; }
.win-search input { flex: 1; min-width: 0; padding: 0; margin-left: 12px; border: 0; outline: 0; background: none; }
.win-search input::placeholder { color: #333; font-style: normal; }
.festive { width: 64px; height: 38px; }
.taskview { width: 48px; }
.taskview svg { width: 17px; height: 17px; }
.apps { display: flex; gap: 1px; margin-left: 3px; }
.apps button { width: 48px; position: relative; }
.apps svg { width: 24px; height: 24px; }
.apps button::after { position: absolute; left: 4px; right: 4px; bottom: 0; height: 2px; }
.apps .open::after, .apps .multi::after, .apps .current::after { content: ""; background: #0a78d4; }
.apps .multi::after { background: linear-gradient(90deg, #0a78d4 32px, #5da8e6 32px); }
.apps .current { background: #eee; display: flex; color: inherit; font-weight: 400; }
.apps .current::after { left: 0; right: 0; }
.tray { margin-left: auto; display: flex; align-items: center; padding-right: 4px; font-size: 12px; }
.tray > svg { fill: none; stroke: #111; stroke-width: 1; }
.tray .help, .tray .cloud { stroke: none; }
.help { width: 24px; height: 22px; }
.cloud { width: 24px; height: 16px; margin-left: 25px; }
.temp { width: 30px; margin: 0 24px 0 9px; font-size: 13px; }
.chev { width: 12px; height: 8px; }
.cam { width: 14px; height: 18px; margin-left: 12px; }
.bat { width: 18px; height: 14px; margin-left: 7px; }
.wifi { width: 14px; height: 14px; margin-left: 9px; }
.wifi .dot { fill: #111; }
.vol { width: 16px; height: 14px; margin-left: 7px; }
.lang { width: 24px; margin-left: 10px; }
.clock { width: 62px; margin-left: 10px; display: flex; flex-direction: column; align-items: center; line-height: 18px; font-size: 11px; }
.notif { margin-left: 16px; padding-right: 20px; border-right: 1px solid #a5a5a5; height: 40px; }
.notif svg { width: 16px; height: 16px; }
</style>
